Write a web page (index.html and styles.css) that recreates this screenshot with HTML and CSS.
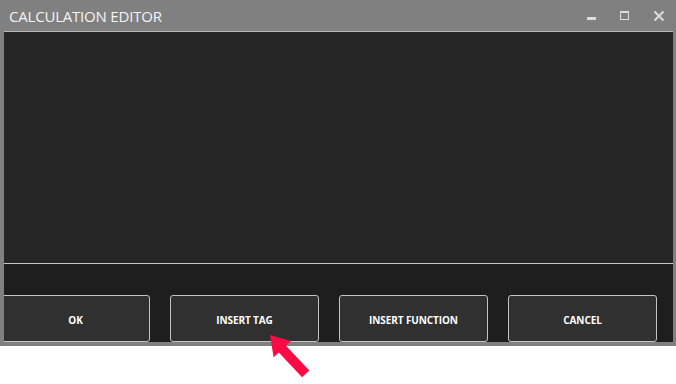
FILE: index.html
```html
<!DOCTYPE html>
<html lang="en">
  <head>
    <meta charset="utf-8">
    <title>Calculation Editor</title>
    <link rel="stylesheet" href="styles.css">
  </head>
  <body>
    <div class="window">
      <div class="titlebar">
        <span class="title">CALCULATION EDITOR</span>
        <svg class="controls" width="100" height="31" viewBox="0 0 100 31">
          <rect x="14" y="17" width="9" height="3" fill="#dcdcdc"/>
          <rect x="47.5" y="11.5" width="8" height="8" fill="none" stroke="#dcdcdc" stroke-width="1"/>
          <rect x="47" y="11" width="9" height="2" fill="#dcdcdc"/>
          <path d="M81.5 11.5 L90.5 20.5 M90.5 11.5 L81.5 20.5" stroke="#dcdcdc" stroke-width="2"/>
        </svg>
      </div>
      <div class="editor"></div>
      <div class="footer">
        <button class="btn first">OK</button>
        <button class="btn">INSERT TAG</button>
        <button class="btn">INSERT FUNCTION</button>
        <button class="btn">CANCEL</button>
      </div>
    </div>
    <svg class="arrow" width="676" height="384" viewBox="0 0 676 384">
      <polygon points="270,335 291.1,340.9 286,345.7 309.3,370.4 302.1,377.2 278.8,352.5 273.6,357.3" fill="#ff0a45"/>
    </svg>
  </body>
</html>
```

FILE: styles.css
```css
html, body {
  margin: 0;
  background: #fff;
}
body {
  position: relative;
  width: 676px;
  height: 384px;
  overflow: hidden;
  font-family: "Open Sans", "Liberation Sans", sans-serif;
}
.window {
  width: 676px;
  box-sizing: border-box;
  background: #808080;
  padding: 0 3px 4px 4px;
}
.titlebar {
  height: 31px;
  display: flex;
  align-items: center;
}
.title {
  color: #f4f4f4;
  font-size: 15px;
  padding-left: 5px;
  letter-spacing: -0.2px;
}
.controls {
  margin-left: auto;
  display: block;
}
.editor {
  height: 231px;
  background: #262626;
  border-top: 1px solid #b8b8b8;
  border-bottom: 1px solid #c8c8c8;
}
.footer {
  height: 78px;
  box-sizing: border-box;
  background: #1e1e1e;
  padding-top: 31px;
  display: flex;
  gap: 20px;
  overflow: hidden;
}
.btn {
  flex: none;
  width: 149px;
  height: 47px;
  box-sizing: border-box;
  background: #303030;
  border: 1px solid #c4c4c4;
  border-radius: 3px;
  color: #fff;
  font-family: "Open Sans", "Liberation Sans", sans-serif;
  font-weight: 700;
  font-size: 10px;
  letter-spacing: -0.1px;
  padding: 2px 0 0;
}
.btn.first {
  margin-left: -3px;
}
.arrow {
  position: absolute;
  left: 0;
  top: 0;
  pointer-events: none;
}
```
